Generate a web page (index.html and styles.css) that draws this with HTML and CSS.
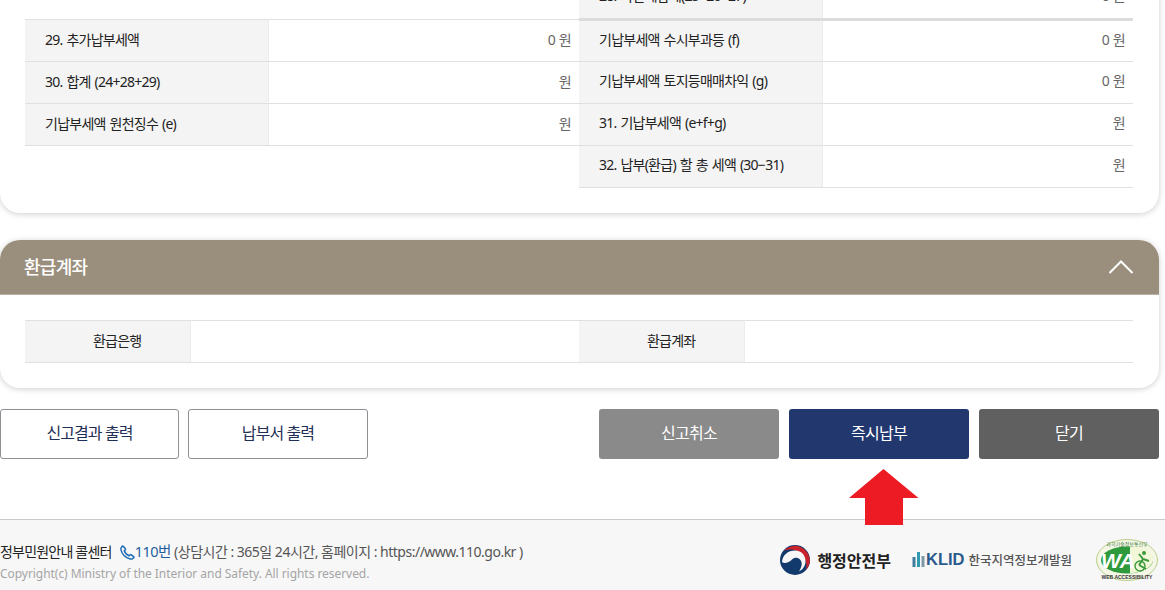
FILE: index.html
```html
<!DOCTYPE html>
<html lang="ko">
<head>
    <meta charset="UTF-8">
    <meta name="viewport" content="width=device-width, initial-scale=1.0">
    <title>신고결과</title>
    <link rel="stylesheet" href="styles.css">
</head>
<body>
    <div class="wrap">
        <section class="card card-tax">
            <div class="columns">
                <table class="tbl tbl-left">
                    <tr><th>29. 추가납부세액</th><td>0 원</td></tr>
                    <tr><th>30. 합계 (24+28+29)</th><td>원</td></tr>
                    <tr><th>기납부세액 원천징수 (e)</th><td>원</td></tr>
                </table>
                <table class="tbl tbl-right">
                    <tr class="row-sum"><th>28. 가산세합계(25+26+27)</th><td>0 원</td></tr>
                    <tr><th>기납부세액 수시부과등 (f)</th><td>0 원</td></tr>
                    <tr><th>기납부세액 토지등매매차익 (g)</th><td>0 원</td></tr>
                    <tr><th>31. 기납부세액 (e+f+g)</th><td>원</td></tr>
                    <tr><th>32. 납부(환급) 할 총 세액 (30−31)</th><td>원</td></tr>
                </table>
            </div>
        </section>

        <section class="card card-refund">
            <header class="card-head">
                <h2>환급계좌</h2>
                <svg class="chevron" width="26" height="16" viewBox="0 0 26 16"><path d="M1.5 14 L13 2.5 L24.5 14" fill="none" stroke="#fff" stroke-width="2"/></svg>
            </header>
            <div class="columns">
                <table class="tbl tbl-account">
                    <tr><th>환급은행</th><td></td></tr>
                </table>
                <table class="tbl tbl-account">
                    <tr><th>환급계좌</th><td></td></tr>
                </table>
            </div>
        </section>

        <div class="buttons">
            <div class="btn-group btn-group-left">
                <button class="btn btn-line">신고결과 출력</button>
                <button class="btn btn-line">납부서 출력</button>
            </div>
            <div class="btn-group">
                <button class="btn btn-gray">신고취소</button>
                <button class="btn btn-navy">즉시납부</button>
                <button class="btn btn-dark">닫기</button>
            </div>
        </div>
    </div>

    <footer class="footer">
        <div class="footer-text">
            <p class="call"><span class="call-name">정부민원안내 콜센터</span>
                <svg class="phone" width="15" height="15" viewBox="0 0 15 15"><path d="M3.2 1.2 L5.2 3.6 C5.6 4.1 5.5 4.6 5.1 5 L4.3 5.8 C4.9 7.9 6.7 9.9 9 10.8 L10 9.9 C10.4 9.5 10.9 9.5 11.3 9.8 L13.6 11.6 C14 12 14 12.5 13.6 12.9 L12.6 13.7 C11.9 14.2 11.1 14.2 10.2 14 C5.6 12.8 2 9.2 1 4.9 C0.8 3.9 0.9 3 1.5 2.3 L2.2 1.3 C2.5 0.9 2.9 0.9 3.2 1.2 Z" fill="none" stroke="#1f6db5" stroke-width="1.5"/></svg><span class="call-num">110번</span> (상담시간 : 365일 24시간, 홈페이지 : https://www.110.go.kr )</p>
            <p class="copy">Copyright(c) Ministry of the Interior and Safety. All rights reserved.</p>
        </div>
        <div class="logos">
            <div class="logo-mois">
                <svg width="30" height="30" viewBox="0 0 30 30">
                    <circle cx="15" cy="15" r="15" fill="#123a6d"/>
                    <path d="M3.5 6 A15 15 0 0 1 29.7 18 C29 20.5 27.8 23 26 24.8 C28 17 24 8 15.5 5.2 C11 4 7 4.5 3.5 6 Z" fill="#c8232c"/>
                    <path d="M2 17 C2.5 10 8 5.5 15 5.5 C22 5.5 26 11 25.5 17 C25 22 22 25 19 26.5 C22 22 23 17 19.5 14 C17 12 14 12.5 12 14.5 C9 18 4 19 2 17 Z" fill="#f7f7f7"/>
                </svg>
                <span>행정안전부</span>
            </div>
            <div class="logo-klid">
                <svg width="13" height="18" viewBox="0 0 13 18">
                    <rect x="0.5" y="6" width="3" height="10" fill="#3f7f9d"/>
                    <rect x="5" y="1" width="3" height="15" fill="#2f9ab0"/>
                    <rect x="9.5" y="5" width="3" height="11" fill="#7c9aa8"/>
                </svg>
                <b>KLID</b>
                <span>한국지역정보개발원</span>
            </div>
            <svg class="logo-wa" width="62" height="42" viewBox="0 0 62 42">
                <ellipse cx="31" cy="21" rx="30.5" ry="20.5" fill="#f5f7e6" stroke="#b9cf8a"/>
                <ellipse cx="31" cy="21" rx="26" ry="13.5" fill="#2f9a3c"/>
                <path d="M34 7.8 H46 C53 10.5 58 16 57 22 C55 29 46 33.5 34 34.2 Z" fill="#f2f7d8"/>
                <text class="wa-mark" x="5" y="29">WA</text>
                <path d="M43 15 L47 20 L43 26 M47 20 L53 22 M43 26 L50 30" fill="none" stroke="#3a9a3c" stroke-width="2"/>
                <circle cx="48" cy="14" r="2" fill="#3a9a3c"/>
                <circle cx="44" cy="27" r="5" fill="none" stroke="#3a9a3c" stroke-width="1.4"/>
                <text class="wa-top" x="31" y="6.5" text-anchor="middle">과학기술정보통신부</text>
                <text class="wa-bottom" x="31" y="39.5" text-anchor="middle">WEB ACCESSIBILITY</text>
            </svg>
        </div>
    </footer>

    <svg class="red-arrow" width="70" height="57" viewBox="0 0 70 57"><path d="M34.5 0 L69.5 29 H54 V56 H16 V29 H0 Z" fill="#ed1c24"/></svg>
</body>
</html>
```

FILE: styles.css
```css
* {
    box-sizing: border-box;
}
html, body {
    margin: 0;
    padding: 0;
    height: 590px;
    overflow: hidden;
}
body {
    position: relative;
    font-family: "Noto Sans", "Noto Sans CJK KR", sans-serif;
    color: #222;
    background: #fff;
}
.wrap {
    width: 1159px;
    margin-top: -27px;
}
.card {
    background: #fff;
    border-radius: 0 0 20px 20px;
    box-shadow: 0 1px 6px rgba(0, 0, 0, 0.2);
}
.card-tax {
    height: 240px;
}
.card-refund {
    margin-top: 27px;
    height: 148px;
    border-radius: 20px;
}
.card-head {
    display: flex;
    justify-content: space-between;
    align-items: center;
    height: 55px;
    padding: 0 25px 0 24px;
    background: #9a8f7d;
    border-bottom: 1px solid #b9b1a3;
    border-radius: 20px 20px 0 0;
}
.card-head h2 {
    margin: 0 0 2px;
    font-size: 18px;
    font-weight: 500;
    color: #fff;
    letter-spacing: -0.7px;
}
.columns {
    display: flex;
    padding: 0 26px 0 25px;
}
.card-tax .columns {
    align-items: flex-start;
}
.card-refund .columns {
    padding-top: 25px;
}
.tbl {
    width: 554px;
    border-collapse: collapse;
    table-layout: fixed;
    font-size: 14px;
    letter-spacing: -0.75px;
    word-spacing: 1px;
}
.tbl th, .tbl td {
    height: 42px;
    padding: 0 0 4px;
    border-bottom: 1px solid #e0e0e0;
}
.tbl th {
    width: 243px;
    padding-left: 20px;
    background: #f4f4f4;
    border-right: 1px solid #ececec;
    font-weight: 400;
    text-align: left;
    color: #222;
}
.tbl td {
    padding-right: 8px;
    text-align: right;
    color: #666;
}
.tbl-left {
    margin-top: 46px;
    border-top: 1px solid #e0e0e0;
}
.tbl-right {
    margin-top: 4px;
}
.tbl-right .row-sum th, .tbl-right .row-sum td {
    border-bottom: 3px solid #dcdcdc;
}
.tbl-account {
    border-top: 1px solid #e0e0e0;
}
.tbl-account th {
    width: 165px;
    padding-left: 20px;
    text-align: center;
}
.buttons {
    display: flex;
    justify-content: space-between;
    margin-top: 21px;
}
.btn-group {
    display: flex;
    gap: 10px;
}
.btn-group-left {
    gap: 9px;
}
.btn {
    width: 180px;
    height: 50px;
    padding: 0 0 4px;
    border: none;
    border-radius: 3px;
    font-family: inherit;
    font-size: 16px;
    letter-spacing: -0.7px;
    color: #fff;
}
.btn-line {
    background: #fff;
    border: 1px solid #8f8f96;
    letter-spacing: -0.9px;
    color: #1f2f56;
}
.btn-line:first-child {
    width: 179px;
}
.btn-gray {
    background: #8a8a8a;
}
.btn-navy {
    background: #22376e;
}
.btn-dark {
    background: #606060;
}
.footer {
    display: flex;
    justify-content: space-between;
    align-items: center;
    height: 71px;
    margin-top: 60px;
    padding: 11px 7px 0 0;
    background: #f7f7f7;
    border-top: 1px solid #c9c9c9;
}
.footer p {
    margin: 0;
    white-space: nowrap;
}
.call {
    font-size: 14px;
    letter-spacing: -0.5px;
    color: #555;
}
.call-name {
    letter-spacing: -0.8px;
    color: #222;
}
.phone {
    margin-left: 5px;
    vertical-align: -3px;
}
.call-num {
    color: #1f5f9f;
    font-size: 14.5px;
}
.footer .copy {
    margin-top: 4px;
    font-size: 12px;
    letter-spacing: -0.05px;
    color: #a5a5a5;
}
.logos {
    display: flex;
    align-items: center;
    margin-bottom: 2px;
}
.logo-mois {
    display: flex;
    align-items: center;
    gap: 7px;
    margin-right: 21px;
    font-size: 16px;
    font-weight: 700;
    color: #222;
}
.logo-klid {
    display: flex;
    align-items: center;
    gap: 1px;
    margin-right: 24px;
    color: #2b5a8c;
}
.logo-klid b {
    font-family: "Liberation Sans", sans-serif;
    font-size: 16.5px;
    font-weight: 700;
}
.logo-klid span {
    margin-left: 3px;
    font-size: 12.5px;
    font-weight: 500;
    color: #555;
}
.wa-mark {
    font-family: "Liberation Sans", sans-serif;
    font-size: 21px;
    font-weight: 700;
    font-style: italic;
    fill: #fff;
}
.wa-top {
    font-size: 5px;
    fill: #3a7a3c;
}
.wa-bottom {
    font-family: "Liberation Sans", sans-serif;
    font-size: 5px;
    font-weight: 700;
    fill: #333;
}
.red-arrow {
    position: absolute;
    left: 849px;
    top: 469px;
}
```
